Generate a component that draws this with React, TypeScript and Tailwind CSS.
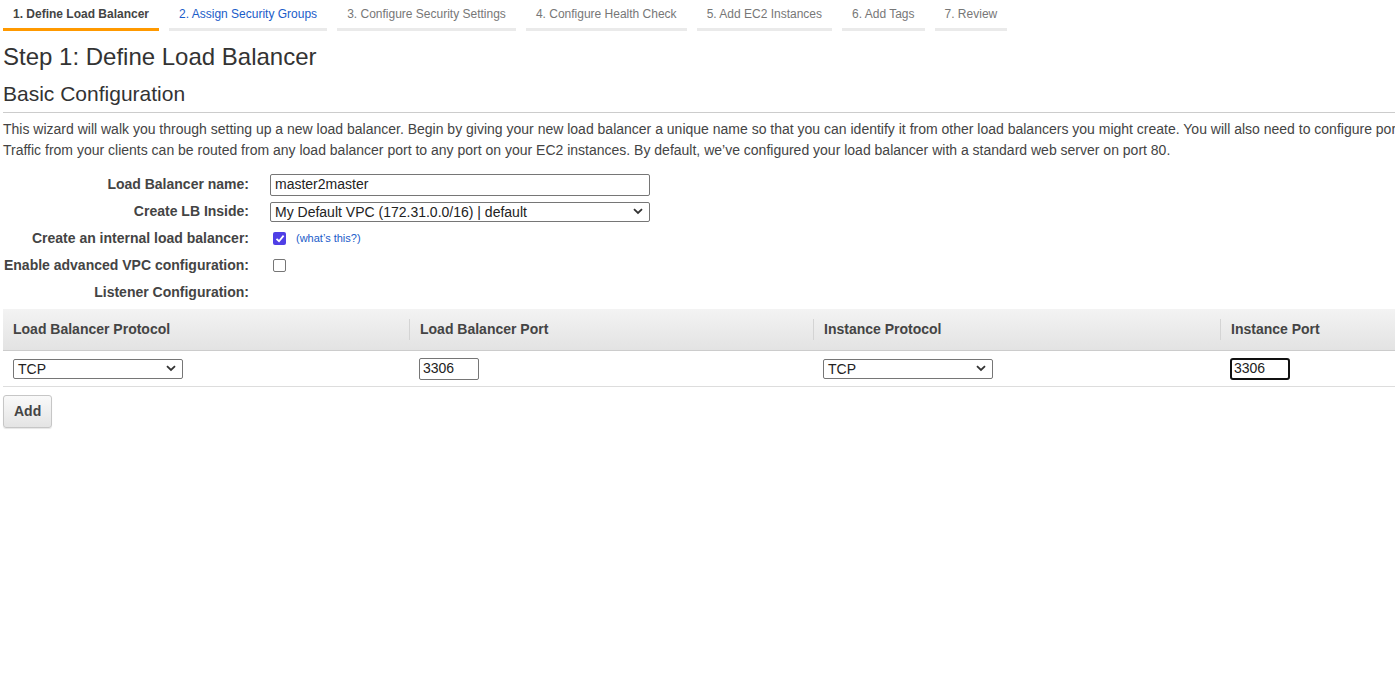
import React from 'react';

const tabs = [
  { label: '1. Define Load Balancer', state: 'active' },
  { label: '2. Assign Security Groups', state: 'next' },
  { label: '3. Configure Security Settings', state: 'idle' },
  { label: '4. Configure Health Check', state: 'idle' },
  { label: '5. Add EC2 Instances', state: 'idle' },
  { label: '6. Add Tags', state: 'idle' },
  { label: '7. Review', state: 'idle' },
];

const Chevron: React.FC = () => (
  <svg width="10" height="7" viewBox="0 0 10 7" className="shrink-0">
    <path d="M1 1.2 L5 5 L9 1.2" fill="none" stroke="#333" strokeWidth="1.8" />
  </svg>
);

const FakeSelect: React.FC<{ value: string; className: string }> = ({ value, className }) => (
  <div className={`flex items-center justify-between border border-[#767676] rounded-[2px] bg-white pl-[4px] pr-[6px] h-[20px] text-[14px] text-[#222] ${className}`}>
    <span className="leading-none">{value}</span>
    <Chevron />
  </div>
);

const Row: React.FC<{ label: string; children?: React.ReactNode }> = ({ label, children }) => (
  <div className="grid grid-cols-[246px_1fr] gap-x-[21px] h-[27px] items-center">
    <div className="text-right font-bold text-[#444]">{label}</div>
    <div className="flex items-center">{children}</div>
  </div>
);

const App: React.FC = () => {
  return (
    <div className="w-[1395px] h-[693px] overflow-hidden bg-white text-[#444] font-['Liberation_Sans',Arial,sans-serif]">
      {/* wizard tabs */}
      <div className="flex gap-[10px] pl-[3px] h-[31px]">
        {tabs.map((tab) => (
          <div
            key={tab.label}
            className={`px-[10px] pt-[5px] text-[12px] border-b-[3px] whitespace-nowrap ${
              tab.state === 'active'
                ? 'border-[#f90] font-bold text-[#444]'
                : tab.state === 'next'
                ? 'border-[#eaeaea] text-[#1a5cc9]'
                : 'border-[#eaeaea] text-[#777]'
            }`}
          >
            {tab.label}
          </div>
        ))}
      </div>

      <div className="px-[3px]">
        <h1 className="text-[24px] leading-[28px] mt-[12px] text-[#333]">Step 1: Define Load Balancer</h1>
        <h2 className="text-[21px] leading-[24px] mt-[11px] pb-[6px] border-b border-[#ccc] text-[#333] w-[1400px]">
          Basic Configuration
        </h2>
        <div className="text-[14px] leading-[21px] mt-[6px] whitespace-nowrap text-[#444]">
          <p>
            This wizard will walk you through setting up a new load balancer. Begin by giving your new load balancer a unique name so that you can identify it from other load balancers you might create. You will also need to configure ports and protocols for your load balancer.
          </p>
          <p>
            Traffic from your clients can be routed from any load balancer port to any port on your EC2 instances. By default, we’ve configured your load balancer with a standard web server on port 80.
          </p>
        </div>

        {/* form */}
        <div className="mt-[10px] text-[14px]">
          <Row label="Load Balancer name:">
            <div className="w-[380px] h-[22px] border border-[#767676] rounded-[2px] px-[4px] flex items-center text-[14px] text-[#222]">master2master</div>
          </Row>
          <Row label="Create LB Inside:">
            <FakeSelect value="My Default VPC (172.31.0.0/16) | default" className="w-[380px]" />
          </Row>
          <Row label="Create an internal load balancer:">
            <div className="flex items-center gap-[10px]">
              <span className="w-[13px] h-[13px] ml-[3px] rounded-[2px] bg-[#4f3fe6] flex items-center justify-center">
                <svg width="10" height="9" viewBox="0 0 10 9">
                  <path d="M1.5 4.8 L4 7.2 L8.6 1.6" fill="none" stroke="#fff" strokeWidth="1.8" />
                </svg>
              </span>
              <span className="text-[11px] text-[#1a5cc9]">(what’s this?)</span>
            </div>
          </Row>
          <Row label="Enable advanced VPC configuration:">
            <span className="w-[13px] h-[13px] ml-[3px] rounded-[2px] border border-[#767676] bg-white" />
          </Row>
          <Row label="Listener Configuration:" />
        </div>

        {/* listener table */}
        <div className="mt-[3px] w-[1400px]">
          <div className="grid grid-cols-[406px_404px_407px_1fr] h-[42px] bg-gradient-to-b from-[#f3f3f3] to-[#e3e3e3] border-b border-[#ccc] font-bold text-[14px] text-[#444]">
            <div className="flex items-center pl-[10px]">Load Balancer Protocol</div>
            <div className="flex items-center pl-[10px] my-[10px] border-l border-[#d4d4d4]">Load Balancer Port</div>
            <div className="flex items-center pl-[10px] my-[10px] border-l border-[#d4d4d4]">Instance Protocol</div>
            <div className="flex items-center pl-[10px] my-[10px] border-l border-[#d4d4d4]">Instance Port</div>
          </div>
          <div className="grid grid-cols-[406px_404px_407px_1fr] h-[36px] border-b border-[#ddd] items-center">
            <div className="pl-[10px]">
              <FakeSelect value="TCP" className="w-[170px]" />
            </div>
            <div className="pl-[10px]">
              <div className="w-[60px] h-[22px] border border-[#767676] rounded-[2px] px-[3px] flex items-center text-[14px] text-[#222]">3306</div>
            </div>
            <div className="pl-[10px]">
              <FakeSelect value="TCP" className="w-[170px]" />
            </div>
            <div className="pl-[10px]">
              <div className="w-[60px] h-[22px] border-2 border-[#111] rounded-[3px] px-[2px] flex items-center text-[14px] text-[#222]">3306</div>
            </div>
          </div>
        </div>

        <button className="mt-[8px] h-[33px] px-[10px] rounded-[3px] border border-[#c6c6c6] bg-gradient-to-b from-[#f9f9f9] to-[#e4e4e4] font-bold text-[14px] text-[#444] shadow-[0_1px_1px_rgba(0,0,0,0.1)]">
          Add
        </button>
      </div>
    </div>
  );
};

export default App;
